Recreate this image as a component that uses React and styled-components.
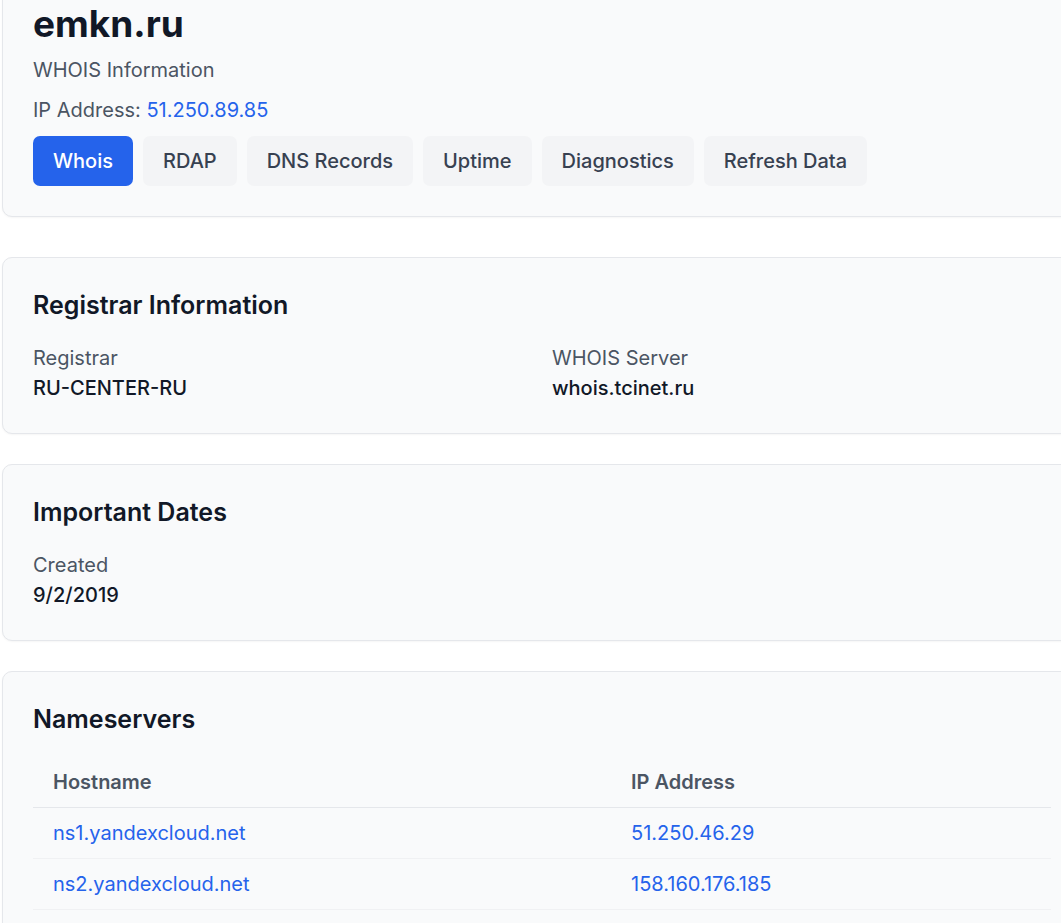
import React from "react";
import styled, { createGlobalStyle } from "styled-components";

const GlobalStyle = createGlobalStyle`
  html, body {
    margin: 0;
    padding: 0;
    background: #ffffff;
    overflow: hidden;
  }
  body {
    font-family: Inter, "Noto Sans", "Liberation Sans", sans-serif;
    font-size: 20px;
    line-height: 1.5;
    color: #111827;
  }
`;

const Page = styled.div`
  display: flex;
  flex-direction: column;
  gap: 30px;
  margin-top: -31px;
  padding-left: 2px;
`;

const Card = styled.section`
  box-sizing: border-box;
  width: 1080px;
  padding: 30px;
  background: #f9fafb;
  border: 1px solid #e5e7eb;
  border-radius: 10px;
  box-shadow: 0 1px 2px rgba(0, 0, 0, 0.04);
  margin-bottom: ${(p) => (p.$spaced ? "10px" : "0")};
`;

const Title = styled.h1`
  margin: 0 0 7px;
  font-size: 37px;
  line-height: 48px;
  font-weight: 700;
  color: #111827;
`;

const Subtitle = styled.p`
  margin: 0 0 10px;
  color: #4b5563;
`;

const IpLine = styled.p`
  margin: 0 0 11px;
  color: #4b5563;
`;

const Link = styled.a`
  color: #2563eb;
  text-decoration: none;
`;

const Tabs = styled.div`
  display: flex;
  gap: 10px;
`;

const Tab = styled.button`
  font: inherit;
  font-weight: 500;
  padding: 10px 20px;
  border: 0;
  border-radius: 7px;
  cursor: pointer;
  background: ${(p) => (p.$active ? "#2563eb" : "#f3f4f6")};
  color: ${(p) => (p.$active ? "#ffffff" : "#374151")};
`;

const Heading = styled.h2`
  margin: 0 0 20px;
  font-size: 25px;
  line-height: 35px;
  font-weight: 600;
  color: #111827;
`;

const Grid = styled.div`
  display: grid;
  grid-template-columns: 1fr 1fr;
  column-gap: 20px;
`;

const Label = styled.div`
  color: #4b5563;
`;

const Value = styled.div`
  font-weight: 500;
  color: #111827;
`;

const Table = styled.table`
  width: 100%;
  table-layout: fixed;
  border-collapse: collapse;
`;

const Th = styled.th`
  text-align: left;
  font-weight: 600;
  color: #4b5563;
  padding: 10px 20px;
  border-bottom: 1px solid #e5e7eb;
  width: ${(p) => p.$w || "auto"};
`;

const Td = styled.td`
  padding: 10px 20px;
  border-bottom: 1px solid #f0f1f3;
`;

const nameservers = [
  { host: "ns1.yandexcloud.net", ip: "51.250.46.29" },
  { host: "ns2.yandexcloud.net", ip: "158.160.176.185" },
];

const tabs = ["Whois", "RDAP", "DNS Records", "Uptime", "Diagnostics", "Refresh Data"];

export default function App() {
  return (
    <>
      <GlobalStyle />
      <Page>
        <Card $spaced>
          <Title>emkn.ru</Title>
          <Subtitle>WHOIS Information</Subtitle>
          <IpLine>
            IP Address: <Link href="#">51.250.89.85</Link>
          </IpLine>
          <Tabs>
            {tabs.map((t, i) => (
              <Tab key={t} $active={i === 0}>
                {t}
              </Tab>
            ))}
          </Tabs>
        </Card>

        <Card>
          <Heading>Registrar Information</Heading>
          <Grid>
            <div>
              <Label>Registrar</Label>
              <Value>RU-CENTER-RU</Value>
            </div>
            <div>
              <Label>WHOIS Server</Label>
              <Value>whois.tcinet.ru</Value>
            </div>
          </Grid>
        </Card>

        <Card>
          <Heading>Important Dates</Heading>
          <Label>Created</Label>
          <Value>9/2/2019</Value>
        </Card>

        <Card>
          <Heading>Nameservers</Heading>
          <Table>
            <thead>
              <tr>
                <Th $w="538px">Hostname</Th>
                <Th>IP Address</Th>
              </tr>
            </thead>
            <tbody>
              {nameservers.map((ns) => (
                <tr key={ns.host}>
                  <Td>
                    <Link href="#">{ns.host}</Link>
                  </Td>
                  <Td>
                    <Link href="#">{ns.ip}</Link>
                  </Td>
                </tr>
              ))}
            </tbody>
          </Table>
        </Card>
      </Page>
    </>
  );
}
